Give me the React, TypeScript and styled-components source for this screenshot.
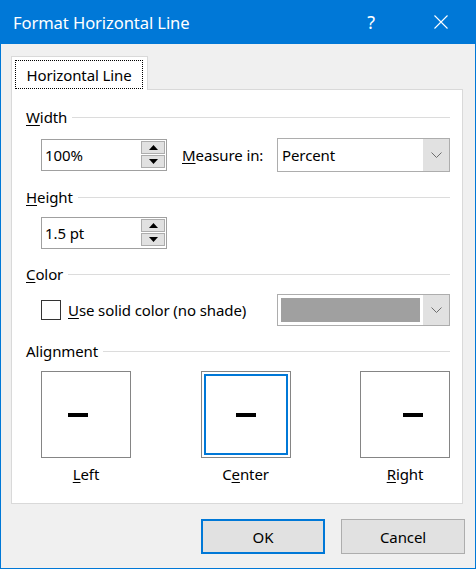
import React from 'react';
import styled, { createGlobalStyle } from 'styled-components';

const Global = createGlobalStyle`
  html, body { margin: 0; padding: 0; background: #f0f0f0; }
  body {
    font-family: "Noto Sans", "Segoe UI", sans-serif;
    font-size: 15px;
    letter-spacing: -0.1px;
    color: #000;
  }
`;

const Window = styled.div`
  width: 476px;
  height: 569px;
  box-sizing: border-box;
  border: 1px solid #0078d7;
  border-top: none;
  background: #f0f0f0;
  display: flex;
  flex-direction: column;
`;

const TitleBar = styled.div`
  height: 44px;
  background: #0078d7;
  color: #fff;
  display: flex;
  align-items: center;
  flex-shrink: 0;
`;

const TitleText = styled.div`
  flex: 1;
  padding-left: 12px;
  padding-top: 2px;
  font-size: 16.6px;
  line-height: 22px;
`;

const TitleButton = styled.div<{ $w: number; $mr?: number }>`
  width: ${p => p.$w}px;
  margin-right: ${p => p.$mr ?? 0}px;
  height: 44px;
  display: flex;
  align-items: center;
  justify-content: center;
  font-size: 18px;
`;

const TabStrip = styled.div`
  margin-top: 12px;
  padding-left: 10px;
  display: flex;
`;

const Tab = styled.div`
  position: relative;
  z-index: 1;
  background: #fff;
  border: 1px solid #d9d9d9;
  border-bottom: none;
  padding: 3px 4px 1px 3px;
  margin-bottom: -1px;
`;

const FocusRect = styled.div`
  width: 128px;
  height: 29px;
  box-sizing: border-box;
  border: 1px dotted #000;
  display: flex;
  align-items: center;
  justify-content: center;
`;

const Panel = styled.div`
  margin-left: 10px;
  width: 452px;
  box-sizing: border-box;
  background: #fff;
  border: 1px solid #d9d9d9;
  padding: 17px 12px 19px 14px;
  display: flex;
  flex-direction: column;
`;

const SectionHeader = styled.div<{ $mt?: number }>`
  height: 20px;
  margin-top: ${p => p.$mt ?? 0}px;
  display: flex;
  align-items: center;
  gap: 5px;
  line-height: 20px;
  & > span {
    margin-top: -1px;
  }
  &::after {
    content: '';
    flex: 1;
    height: 1px;
    background: #dcdcdc;
  }
`;

const Row = styled.div<{ $mt: number; $h: number }>`
  margin-top: ${p => p.$mt}px;
  height: ${p => p.$h}px;
  padding-left: 15px;
  display: flex;
  align-items: center;
`;

const SpinBox = styled.div`
  width: 126px;
  height: 32px;
  box-sizing: border-box;
  border: 1px solid #a0a0a0;
  background: #fff;
  display: flex;
  align-items: center;
  padding: 1px 1px 1px 3px;
`;

const SpinValue = styled.span`
  flex: 1;
`;

const SpinButtons = styled.div`
  display: flex;
  flex-direction: column;
  gap: 1px;
  align-self: stretch;
  width: 24px;
  padding-bottom: 1px;
`;

const SpinButton = styled.div`
  flex: 1;
  background: #e1e1e1;
  border: 1px solid #adadad;
  display: flex;
  align-items: center;
  justify-content: center;
`;

const FieldLabel = styled.span`
  margin-left: 15px;
`;

const Select = styled.div<{ $h: number }>`
  margin-left: auto;
  width: 173px;
  height: ${p => p.$h}px;
  box-sizing: border-box;
  border: 1px solid #adadad;
  background: #fff;
  display: flex;
  align-items: stretch;
`;

const SelectValue = styled.div`
  flex: 1;
  display: flex;
  align-items: center;
  padding-left: 4px;
`;

const Swatch = styled.div`
  flex: 1;
  margin: 3px;
  background: #a0a0a0;
`;

const DropButton = styled.div`
  width: 26px;
  background: #e1e1e1;
  display: flex;
  align-items: center;
  justify-content: center;
`;

const Checkbox = styled.div`
  width: 20px;
  height: 20px;
  box-sizing: border-box;
  border: 1px solid #333;
  background: #fff;
`;

const CheckLabel = styled.span`
  margin-left: 7px;
`;

const AlignRow = styled.div`
  margin-top: 10px;
  padding-left: 15px;
  display: flex;
  justify-content: space-between;
`;

const AlignOption = styled.div`
  display: flex;
  flex-direction: column;
  align-items: center;
  width: 90px;
`;

const AlignBox = styled.div<{ $selected?: boolean; $offset: number }>`
  width: 90px;
  height: 87px;
  box-sizing: border-box;
  border: 1px solid #858585;
  display: flex;
  align-items: center;
  justify-content: center;
  box-shadow: ${p => (p.$selected ? 'inset 0 0 0 2px #fff, inset 0 0 0 4px #0078d7' : 'none')};
  &::before {
    content: '';
    width: 20px;
    height: 4px;
    background: #000;
    transform: translateX(${p => p.$offset}px);
  }
`;

const AlignLabel = styled.div`
  margin-top: 6px;
  height: 20px;
  line-height: 20px;
`;

const ButtonRow = styled.div`
  margin-top: 15px;
  padding-right: 10px;
  display: flex;
  justify-content: flex-end;
  gap: 16px;
`;

const DialogButton = styled.div<{ $default?: boolean }>`
  width: 124px;
  height: 35px;
  box-sizing: border-box;
  background: #e1e1e1;
  border: ${p => (p.$default ? '2px solid #0078d7' : '1px solid #adadad')};
  display: flex;
  align-items: center;
  justify-content: center;
`;

const U = styled.u`
  text-decoration-thickness: 1px;
  text-underline-offset: 2px;
`;

const UpArrow = () => (
  <svg width="9" height="5" viewBox="0 0 9 5"><path d="M0 5 L4.5 0 L9 5 Z" fill="#000" /></svg>
);
const DownArrow = () => (
  <svg width="9" height="5" viewBox="0 0 9 5"><path d="M0 0 L4.5 5 L9 0 Z" fill="#000" /></svg>
);
const Chevron = () => (
  <svg width="11" height="6" viewBox="0 0 11 6">
    <path d="M0.5 0.5 L5.5 5.5 L10.5 0.5" fill="none" stroke="#6d6d6d" strokeWidth="1" />
  </svg>
);
const CloseIcon = () => (
  <svg width="14" height="14" viewBox="0 0 14 14">
    <path d="M0.5 0.5 L13.5 13.5 M13.5 0.5 L0.5 13.5" stroke="#fff" strokeWidth="1.1" />
  </svg>
);

const Spinner = ({ value }: { value: string }) => (
  <SpinBox>
    <SpinValue>{value}</SpinValue>
    <SpinButtons>
      <SpinButton><UpArrow /></SpinButton>
      <SpinButton><DownArrow /></SpinButton>
    </SpinButtons>
  </SpinBox>
);

export default function App() {
  return (
    <>
      <Global />
      <Window>
        <TitleBar>
          <TitleText>Format Horizontal Line</TitleText>
          <TitleButton $w={56} $mr={8}>?</TitleButton>
          <TitleButton $w={68}><CloseIcon /></TitleButton>
        </TitleBar>
        <TabStrip>
          <Tab>
            <FocusRect>Horizontal Line</FocusRect>
          </Tab>
        </TabStrip>
        <Panel>
          <SectionHeader><span><U>W</U>idth</span></SectionHeader>
          <Row $mt={11} $h={34}>
            <Spinner value="100%" />
            <FieldLabel><U>M</U>easure in:</FieldLabel>
            <Select $h={34}>
              <SelectValue>Percent</SelectValue>
              <DropButton><Chevron /></DropButton>
            </Select>
          </Row>
          <SectionHeader $mt={15}><span><U>H</U>eight</span></SectionHeader>
          <Row $mt={9} $h={34}>
            <Spinner value="1.5 pt" />
          </Row>
          <SectionHeader $mt={14}><span><U>C</U>olor</span></SectionHeader>
          <Row $mt={10} $h={32}>
            <Checkbox />
            <CheckLabel><U>U</U>se solid color (no shade)</CheckLabel>
            <Select $h={32}>
              <Swatch />
              <DropButton><Chevron /></DropButton>
            </Select>
          </Row>
          <SectionHeader $mt={15}><span>Alignment</span></SectionHeader>
          <AlignRow>
            <AlignOption>
              <AlignBox $offset={-8} />
              <AlignLabel><U>L</U>eft</AlignLabel>
            </AlignOption>
            <AlignOption>
              <AlignBox $offset={0} $selected />
              <AlignLabel>C<U>e</U>nter</AlignLabel>
            </AlignOption>
            <AlignOption>
              <AlignBox $offset={8} />
              <AlignLabel><U>R</U>ight</AlignLabel>
            </AlignOption>
          </AlignRow>
        </Panel>
        <ButtonRow>
          <DialogButton $default>OK</DialogButton>
          <DialogButton>Cancel</DialogButton>
        </ButtonRow>
      </Window>
    </>
  );
}
